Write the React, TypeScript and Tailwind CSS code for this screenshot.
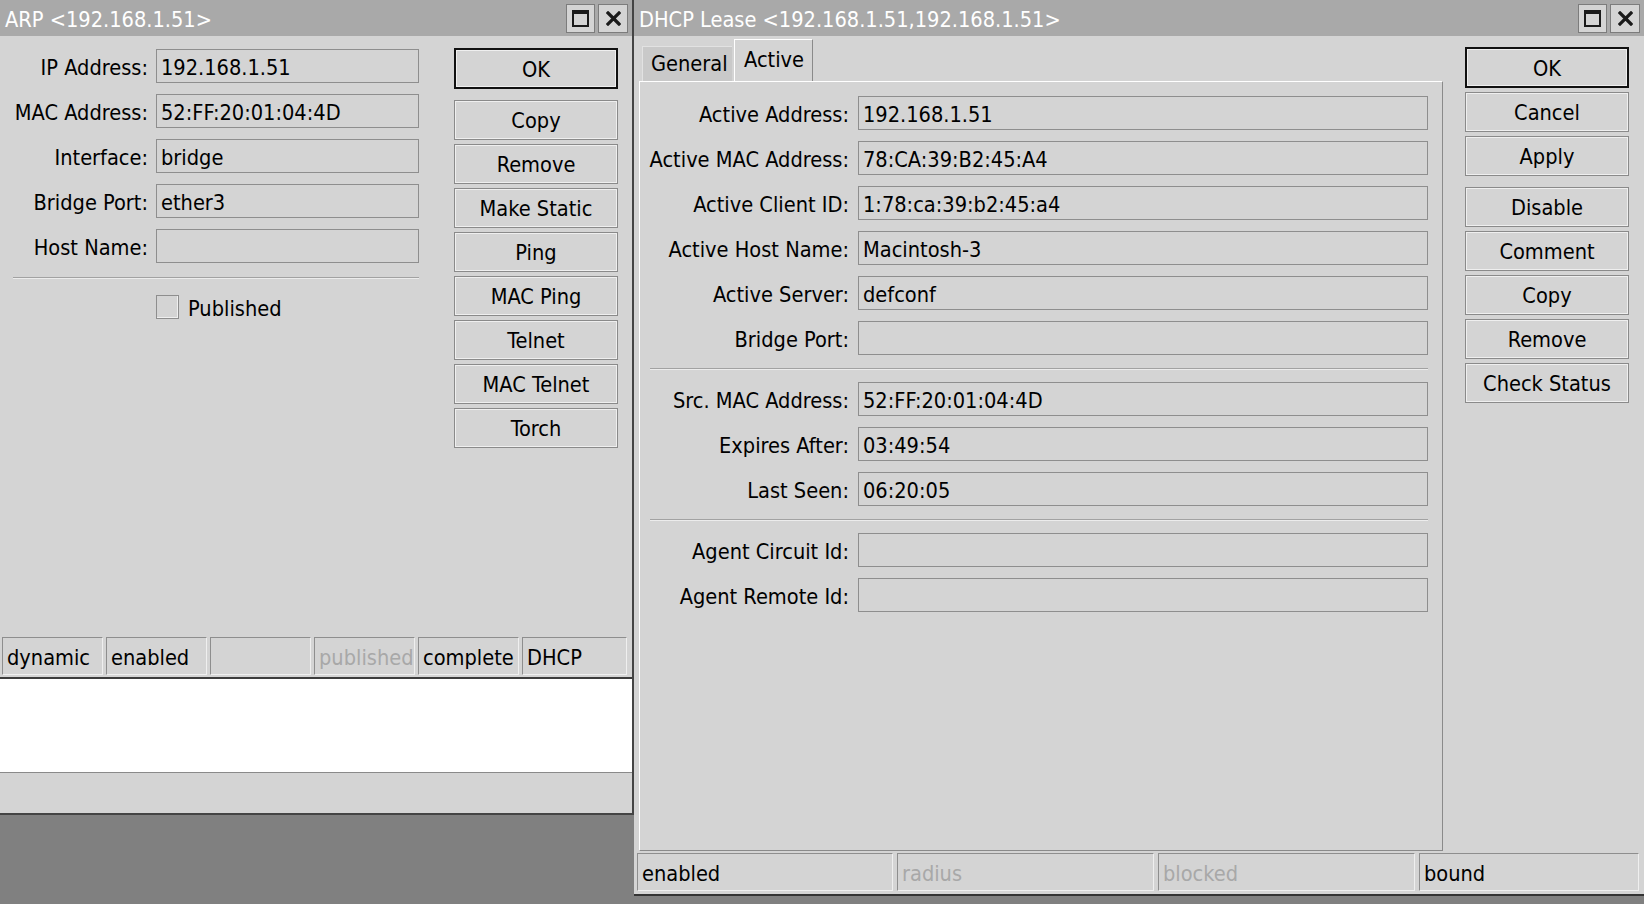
import React from 'react';

const font = "font-['DejaVu_Sans_Condensed','DejaVu_Sans',sans-serif] font-stretch-condensed";

function MaxIcon() {
  return (
    <svg width="17" height="17" viewBox="0 0 17 17">
      <rect x="1" y="1" width="15" height="15" fill="none" stroke="#1a1a1a" strokeWidth="2" />
      <rect x="1" y="1" width="15" height="3" fill="#1a1a1a" />
    </svg>
  );
}

function CloseIcon() {
  return (
    <svg width="15" height="15" viewBox="0 0 15 15">
      <path d="M2 2 L13 13 M13 2 L2 13" stroke="#1a1a1a" strokeWidth="3.2" strokeLinecap="square" />
    </svg>
  );
}

function TitleBar({ title }: { title: string }) {
  return (
    <div className="flex h-[36px] shrink-0 items-center bg-[#a9a9a9] pl-[5px] pr-[4px]">
      <span className="flex-1 pt-[4px] text-[21.6px] leading-none whitespace-nowrap text-white">{title}</span>
      <div className="flex gap-[3px]">
        <div className="flex h-[29px] w-[29px] items-center justify-center border border-[#7c7c7c] bg-[#d4d4d4]">
          <MaxIcon />
        </div>
        <div className="flex h-[29px] w-[30px] items-center justify-center border border-[#7c7c7c] bg-[#d4d4d4]">
          <CloseIcon />
        </div>
      </div>
    </div>
  );
}

function Label({ text, width }: { text: string; width: string }) {
  return (
    <span
      className={`flex h-[34px] shrink-0 items-center justify-end whitespace-nowrap pt-[5px] text-[21.6px] ${width}`}
    >
      {text}
    </span>
  );
}

function Field({ value, width }: { value: string; width: string }) {
  return (
    <div
      className={`flex h-[34px] items-center whitespace-nowrap border border-[#8e8e8e] bg-[#d4d4d4] pl-[4px] pt-[5px] text-[21.6px] ${width}`}
    >
      {value}
    </div>
  );
}

function Button({ label, primary = false }: { label: string; primary?: boolean }) {
  return (
    <div
      className={
        primary
          ? 'flex h-[41px] items-center justify-center border-2 border-[#111] bg-[#d4d4d4] pt-[3px] text-[21.6px] shadow-[inset_0_0_0_1px_#efefef]'
          : 'flex h-[40px] items-center justify-center border border-[#8a8a8a] bg-[#d4d4d4] pt-[3px] text-[21.6px] shadow-[inset_0_0_0_1px_#efefef]'
      }
    >
      {label}
    </div>
  );
}

function StatusCell({ text, width, dim = false }: { text: string; width: string; dim?: boolean }) {
  return (
    <div
      className={`flex h-[38px] items-center whitespace-nowrap border-t border-l border-t-[#8e8e8e] border-l-[#8e8e8e] border-b border-r border-b-[#efefef] border-r-[#efefef] pl-[4px] pt-[5px] text-[21.6px] ${width} ${
        dim ? 'text-[#a8a8a8]' : 'text-black'
      }`}
    >
      {text}
    </div>
  );
}

const arpFields = [
  ['IP Address:', '192.168.1.51'],
  ['MAC Address:', '52:FF:20:01:04:4D'],
  ['Interface:', 'bridge'],
  ['Bridge Port:', 'ether3'],
  ['Host Name:', ''],
];

const arpButtons = ['Copy', 'Remove', 'Make Static', 'Ping', 'MAC Ping', 'Telnet', 'MAC Telnet', 'Torch'];

function ArpWindow() {
  return (
    <div className="flex h-[815px] w-[634px] shrink-0 flex-col border-r-2 border-b-2 border-[#444] bg-[#d4d4d4]">
      <TitleBar title="ARP <192.168.1.51>" />

      <div className="flex h-[601px] shrink-0 pt-[12px]">
        {/* Form */}
        <div className="mt-[1px] w-[419px]">
          <div className="flex flex-col gap-[11px]">
            {arpFields.map(([label, value]) => (
              <div key={label} className="flex h-[34px] items-center">
                <Label text={label} width="w-[148px]" />
                <div className="ml-[8px]">
                  <Field value={value} width="w-[263px]" />
                </div>
              </div>
            ))}
          </div>
          <div className="ml-[13px] mt-[14px] h-[2px] w-[406px] border-t border-b border-t-[#a2a2a2] border-b-[#ececec]" />
          <div className="mt-[16px] flex h-[24px] items-center pl-[156px]">
            <div className="h-[24px] w-[23px] border border-[#8e8e8e] shadow-[inset_-1px_-1px_0_#efefef]" />
            <span className="ml-[9px] flex h-[24px] items-center pt-[5px] text-[21.6px]">Published</span>
          </div>
        </div>

        {/* Buttons */}
        <div className="ml-[35px] flex w-[164px] flex-col gap-[4px]">
          <div className="mb-[7px]">
            <Button label="OK" primary />
          </div>
          {arpButtons.map((b) => (
            <Button key={b} label={b} />
          ))}
        </div>
      </div>

      {/* Status bar */}
      <div className="flex h-[40px] shrink-0 gap-[3px] pl-[2px]">
        <StatusCell text="dynamic" width="w-[101px]" />
        <StatusCell text="enabled" width="w-[101px]" />
        <StatusCell text="" width="w-[101px]" />
        <StatusCell text="published" width="w-[101px]" dim />
        <StatusCell text="complete" width="w-[101px]" />
        <StatusCell text="DHCP" width="w-[105px]" />
      </div>
      <div className="h-[2px] shrink-0 bg-[#3c3c3c]" />
      <div className="h-[93px] shrink-0 bg-white" />
      <div className="h-[1px] shrink-0 bg-[#8a8a8a]" />
      <div className="flex-1 bg-[#d4d4d4]" />
    </div>
  );
}

const activeGroup1 = [
  ['Active Address:', '192.168.1.51'],
  ['Active MAC Address:', '78:CA:39:B2:45:A4'],
  ['Active Client ID:', '1:78:ca:39:b2:45:a4'],
  ['Active Host Name:', 'Macintosh-3'],
  ['Active Server:', 'defconf'],
  ['Bridge Port:', ''],
];

const activeGroup2 = [
  ['Src. MAC Address:', '52:FF:20:01:04:4D'],
  ['Expires After:', '03:49:54'],
  ['Last Seen:', '06:20:05'],
];

const activeGroup3 = [
  ['Agent Circuit Id:', ''],
  ['Agent Remote Id:', ''],
];

function LeaseRows({ rows }: { rows: string[][] }) {
  return (
    <div className="flex flex-col gap-[11px]">
      {rows.map(([label, value]) => (
        <div key={label} className="flex h-[34px] items-center">
          <Label text={label} width="w-[199px]" />
          <div className="ml-[9px]">
            <Field value={value} width="w-[570px]" />
          </div>
        </div>
      ))}
    </div>
  );
}

function Separator() {
  return <div className="mb-[12px] mt-[13px] h-[2px] w-[778px] border-t border-b border-t-[#a2a2a2] border-b-[#ececec]" />;
}

function DhcpWindow() {
  return (
    <div className="flex h-[896px] w-[1010px] shrink-0 flex-col border-b-2 border-[#333] bg-[#d4d4d4]">
      <TitleBar title="DHCP Lease <192.168.1.51,192.168.1.51>" />

      <div className="flex h-[815px] shrink-0">
        {/* Tabs + panel */}
        <div className="ml-[5px] flex w-[804px] flex-col">
          <div className="flex h-[45px] items-end">
            <div className="ml-[3px] flex h-[35px] w-[90px] items-center border-t border-l border-t-[#e2e2e2] border-l-[#e2e2e2] bg-[#c9c9c9] pl-[8px] pt-[1px] text-[21.6px]">
              General
            </div>
            <div className="ml-[2px] flex h-[42px] w-[79px] items-center border-t border-l border-r border-t-white border-l-white border-r-[#8a8a8a] pl-[9px] text-[21.6px]">
              Active
            </div>
          </div>
          <div className="h-[770px] border-t border-l border-t-white border-l-white border-r border-b border-r-[#8a8a8a] border-b-[#8a8a8a] pl-[10px] pt-[14px]">
            <LeaseRows rows={activeGroup1} />
            <Separator />
            <LeaseRows rows={activeGroup2} />
            <Separator />
            <LeaseRows rows={activeGroup3} />
          </div>
        </div>

        {/* Buttons */}
        <div className="ml-[22px] flex w-[164px] flex-col gap-[4px] pt-[11px]">
          <Button label="OK" primary />
          <Button label="Cancel" />
          <div className="mb-[7px]">
            <Button label="Apply" />
          </div>
          <Button label="Disable" />
          <Button label="Comment" />
          <Button label="Copy" />
          <Button label="Remove" />
          <Button label="Check Status" />
        </div>
      </div>

      {/* Status bar */}
      <div className="flex h-[41px] shrink-0 gap-[4px] pl-[3px] pt-[2px]">
        <StatusCell text="enabled" width="w-[256px]" />
        <StatusCell text="radius" width="w-[257px]" dim />
        <StatusCell text="blocked" width="w-[257px]" dim />
        <StatusCell text="bound" width="w-[220px]" />
      </div>
    </div>
  );
}

export default function App() {
  return (
    <div className={`flex h-[904px] w-[1644px] items-start overflow-hidden bg-[#808080] text-black ${font}`}>
      <ArpWindow />
      <DhcpWindow />
    </div>
  );
}
